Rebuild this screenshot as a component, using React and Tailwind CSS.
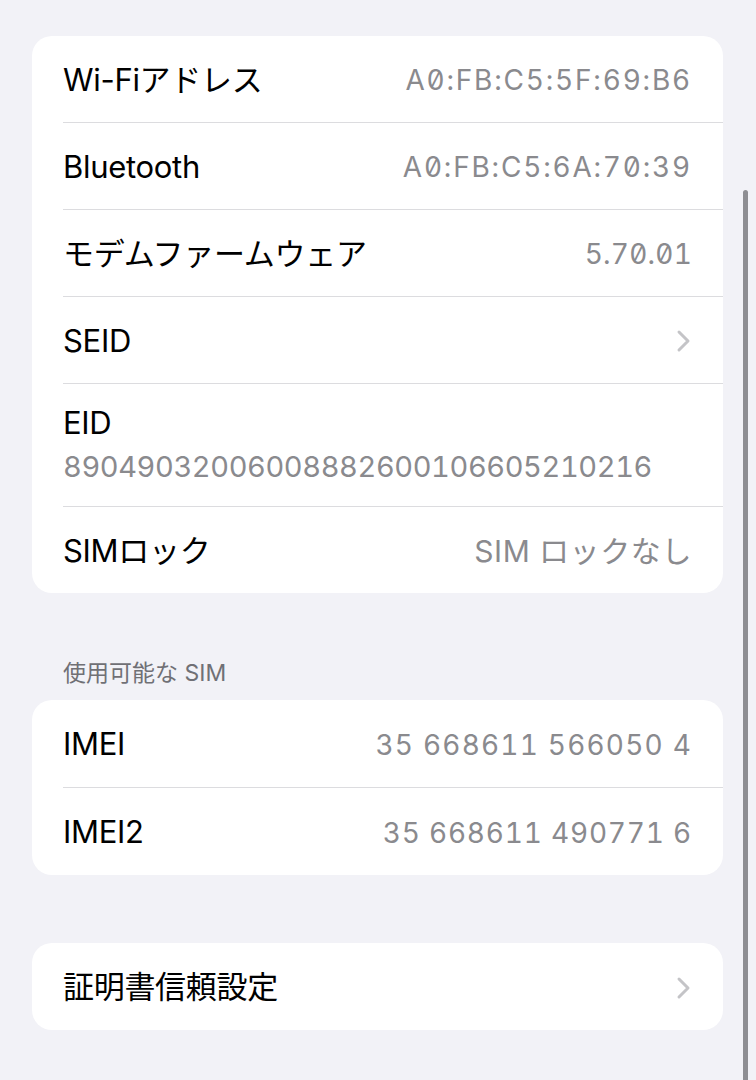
import React from "react";

const FONT = { fontFamily: 'Inter, "Noto Sans CJK JP", sans-serif' };

function Chevron() {
  return (
    <svg width="16" height="24" viewBox="0 0 16 24" fill="none">
      <path d="M3 3 L12 12 L3 21" stroke="#c4c4c7" strokeWidth="3" strokeLinecap="round" strokeLinejoin="round" />
    </svg>
  );
}

function Sep() {
  return <div className="ml-[31px] h-px bg-[#dcdcdf]" />;
}

function Row({ label, value, valueClass = "", chevron, tall }) {
  return (
    <div className={"flex items-center justify-between pl-[31px] pr-[31px] pt-[2px] " + (tall ? "h-[87px]" : "h-[86px]")}>
      <span className="text-[31px] text-black tracking-[-0.3px]">{label}</span>
      {value && (
        <span className={"text-[28px] text-[#8a8a8e] tabular-nums " + valueClass}>{value}</span>
      )}
      {chevron && <Chevron />}
    </div>
  );
}

export default function App() {
  return (
    <div className="relative min-h-[1080px] w-[756px] overflow-hidden bg-[#f2f2f7] pt-[36px]" style={FONT}>
      <div className="ml-[32px] mr-[33px] rounded-[20px] bg-white">
        <Row label="Wi-Fiアドレス" value="A0:FB:C5:5F:69:B6" valueClass="slashed-zero tracking-[1.8px]" />
        <Sep />
        <Row label="Bluetooth" value="A0:FB:C5:6A:70:39" valueClass="slashed-zero tracking-[1.8px]" />
        <Sep />
        <Row label="モデムファームウェア" value="5.70.01" valueClass="slashed-zero tracking-[0.2px]" />
        <Sep />
        <Row label="SEID" chevron />
        <Sep />
        <div className="flex h-[122px] flex-col justify-center pl-[31px]">
          <span className="text-[31px] leading-[40px] text-black tracking-[-0.3px]">EID</span>
          <span className="mt-[4px] text-[29px] leading-[40px] text-[#8a8a8e] tabular-nums tracking-[-0.4px]">89049032006008882600106605210216</span>
        </div>
        <Sep />
        <Row label="SIMロック" value="SIM ロックなし" valueClass="text-[30px] tracking-[0.6px]" />
      </div>

      <div className="ml-[63px] mt-[64px] text-[23px] leading-[32px] text-[#707075]">使用可能な SIM</div>

      <div className="ml-[32px] mr-[33px] mt-[11px] rounded-[20px] bg-white">
        <Row label="IMEI" value="35 668611 566050 4" valueClass="tracking-[1.2px]" tall />
        <Sep />
        <Row label="IMEI2" value="35 668611 490771 6" valueClass="tracking-[0.8px]" tall />
      </div>

      <div className="ml-[32px] mr-[33px] mt-[68px] rounded-[20px] bg-white">
        <Row label="証明書信頼設定" chevron tall />
      </div>

      <div className="absolute left-[743px] top-[190px] h-[900px] w-[5px] rounded-full bg-[#8e8e93]" />
    </div>
  );
}
